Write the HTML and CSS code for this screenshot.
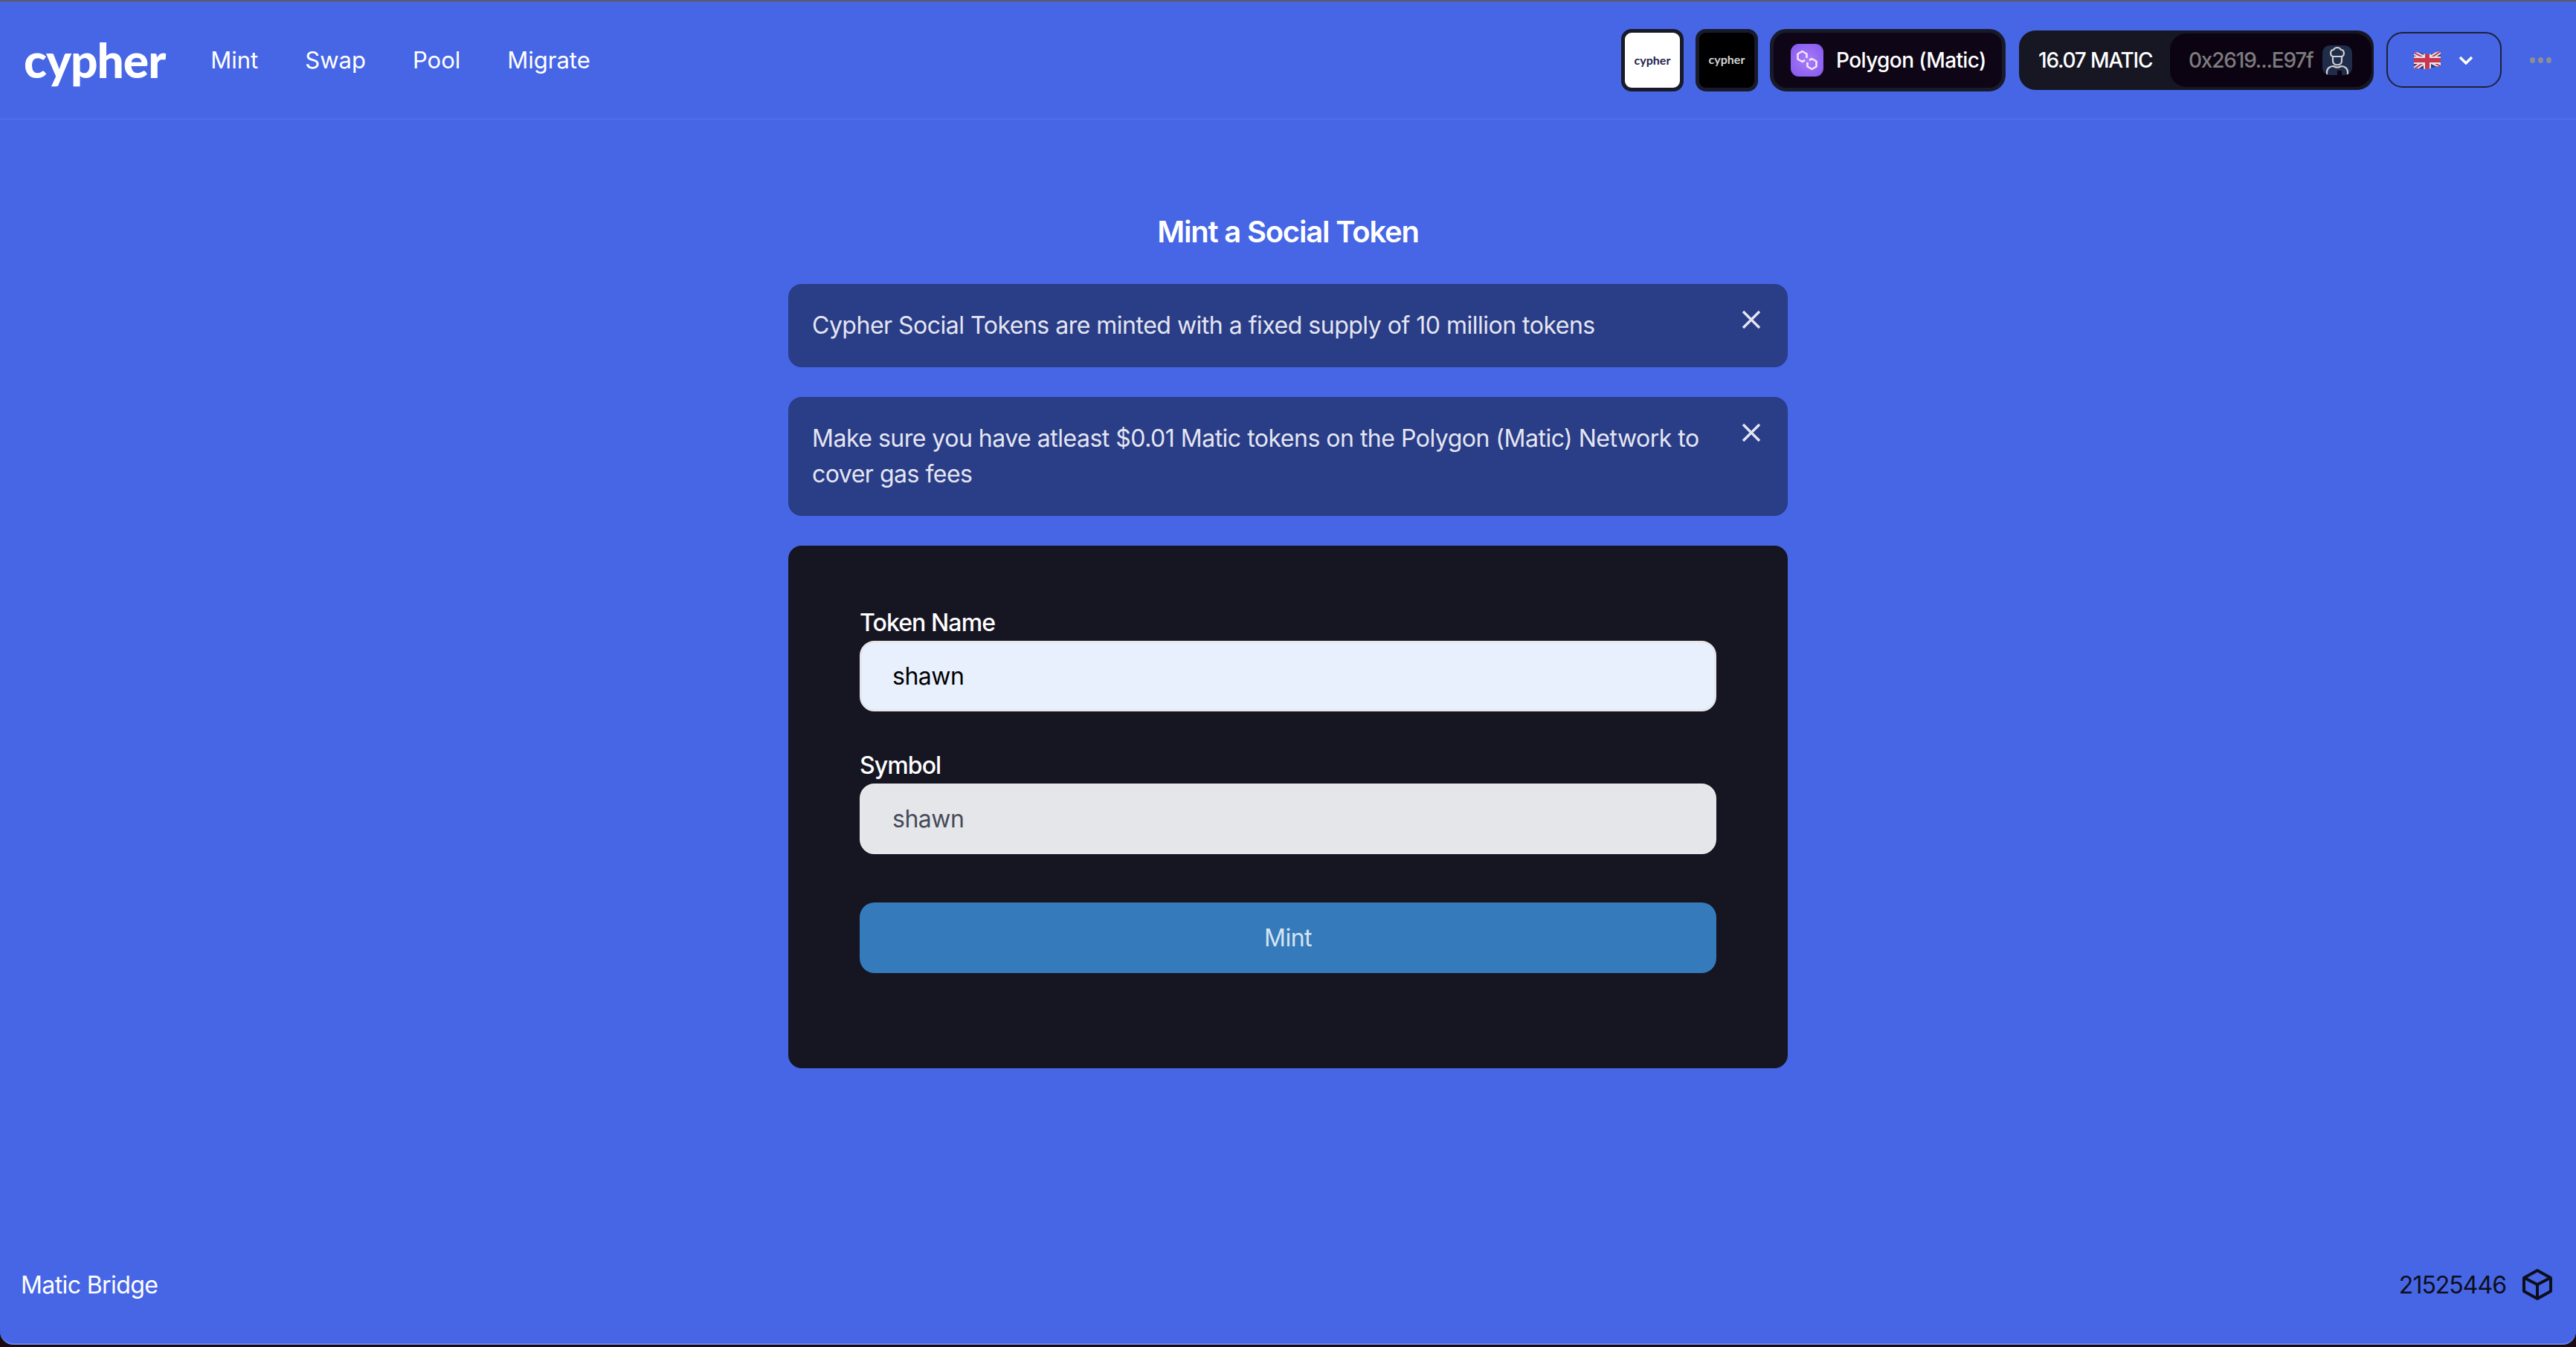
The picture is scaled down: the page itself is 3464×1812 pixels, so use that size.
FILE: index.html
```html
<!DOCTYPE html>
<html lang="en">
<head>
    <meta charset="UTF-8">
    <meta name="viewport" content="width=device-width, initial-scale=1.0">
    <title>Cypher</title>
    <link rel="stylesheet" href="styles.css">
</head>
<body>
    <div class="app">
        <header class="header">
            <div class="header-left">
                <span class="logo">cypher</span>
                <nav class="nav">
                    <a class="nav-link">Mint</a>
                    <a class="nav-link">Swap</a>
                    <a class="nav-link">Pool</a>
                    <a class="nav-link">Migrate</a>
                </nav>
            </div>
            <div class="header-right">
                <button class="theme-btn theme-light"><span class="theme-logo">cypher</span></button>
                <button class="theme-btn theme-dark"><span class="theme-logo">cypher</span></button>
                <button class="network-btn">
                    <span class="network-icon">
                        <svg viewBox="0 0 44 44" width="44" height="44" fill="none" stroke="#f0e6ff" stroke-width="2.6" stroke-linejoin="round">
                            <path d="M21.500 19V13.500L15.500 10l-6 3.500v7l6 3.500 3.500-2"/>
                            <path d="M22.500 25v5.500l6 3.500 6-3.500v-7l-6-3.500-3.500 2"/>
                        </svg>
                    </span>
                    Polygon (Matic)
                </button>
                <div class="account">
                    <span class="balance">16.07 MATIC</span>
                    <span class="address">
                        0x2619...E97f
                        <span class="avatar">
                            <svg viewBox="0 0 40 40" width="40" height="40" fill="none" stroke="#cfcfcf" stroke-width="2.2" stroke-linejoin="round">
                                <path d="M14 15c-4-1-4-9 1-9 2-4 8-4 10 0 5 0 5 8 1 9z"/>
                                <path d="M14 15v6c0 7 12 7 12 0v-6"/>
                                <path d="M6 40v-4c0-5 4-8 9-8 3 2 7 2 10 0 5 0 9 3 9 8v4"/>
                            </svg>
                            <i class="avatar-pocket"></i>
                        </span>
                    </span>
                </div>
                <button class="lang-btn">
                    <svg class="flag" viewBox="0 0 36 28" width="36" height="28">
                        <clipPath id="flagShape">
                            <path d="M0 4C8 1 13 7 20 6S30 2 36 2V22C28 22 24 25 18 26S6 23 0 26Z"/>
                        </clipPath>
                        <g clip-path="url(#flagShape)">
                            <rect width="36" height="28" fill="#2b3f7d"/>
                            <path d="M0 4l36 18M36 2L0 26" stroke="#e8e4e8" stroke-width="6"/>
                            <path d="M0 4l36 18M36 2L0 26" stroke="#c8374f" stroke-width="2"/>
                            <path d="M18 0v28M0 14h36" stroke="#e8e4e8" stroke-width="10"/>
                            <path d="M18 0v28M0 14h36" stroke="#c8374f" stroke-width="6"/>
                        </g>
                    </svg>
                    <svg class="chevron" viewBox="0 0 20 12" width="20" height="12" fill="none" stroke="#fff" stroke-width="3.400">
                        <path d="M2 2l8 8 8-8"/>
                    </svg>
                </button>
                <span class="more-dots"><i></i><i></i><i></i></span>
            </div>
        </header>

        <main class="main">
            <h1 class="title">Mint a Social Token</h1>

            <div class="alert">
                <p>Cypher Social Tokens are minted with a fixed supply of 10 million tokens</p>
                <svg class="close" viewBox="0 0 26 26" width="26" height="26" stroke="#e4e6f2" stroke-width="3.400">
                    <path d="M2 2l22 22M24 2L2 24"/>
                </svg>
            </div>
            <div class="alert">
                <p>Make sure you have atleast $0.01 Matic tokens on the Polygon (Matic) Network to cover gas fees</p>
                <svg class="close" viewBox="0 0 26 26" width="26" height="26" stroke="#e4e6f2" stroke-width="3.400">
                    <path d="M2 2l22 22M24 2L2 24"/>
                </svg>
            </div>

            <form class="card">
                <label class="field-label">Token Name</label>
                <input class="field" type="text" value="shawn">
                <label class="field-label">Symbol</label>
                <input class="field field-disabled" type="text" value="shawn" disabled>
                <button class="mint-btn" type="button">Mint</button>
            </form>
        </main>

        <footer class="footer">
            <a class="bridge">Matic Bridge</a>
            <div class="block">
                <span>21525446</span>
                <svg viewBox="0 0 24 24" width="48" height="48" fill="none" stroke="#0d0e1c" stroke-width="2" stroke-linejoin="round">
                    <path d="M21 16.500v-9l-9-5-9 5v9l9 5z"/>
                    <path d="M3.300 7.500L12 12l8.700-4.500M12 21.500V12"/>
                </svg>
            </div>
        </footer>
    </div>
</body>
</html>
```

FILE: styles.css
```css
* {
    box-sizing: border-box;
}
body {
    margin: 0;
    height: 1812px;
    background-color: #1c0a10;
    font-family: "Inter", "Noto Sans", sans-serif;
    color: white;
    overflow: hidden;
}
.app {
    height: 1809px;
    display: flex;
    flex-direction: column;
    background-color: #4666e5;
    border-top: 2px solid #5c5c5e;
    border-bottom: 2px solid #6c86ea;
    border-radius: 0 0 18px 18px;
}
.header {
    height: 159px;
    flex-shrink: 0;
    display: flex;
    justify-content: space-between;
    align-items: center;
    padding: 0 33px 0 32px;
    border-bottom: 2px solid #4f6fe6;
}
.header-left {
    display: flex;
    align-items: center;
}
.logo {
    font-family: "Lato", sans-serif;
    font-size: 64px;
    font-weight: 900;
    letter-spacing: -1px;
    line-height: 1;
    margin-right: 61px;
}
.nav {
    display: flex;
    gap: 63px;
}
.nav-link {
    font-size: 31px;
}
.header-right {
    display: flex;
    align-items: center;
}
.theme-btn {
    width: 84px;
    height: 84px;
    padding: 0;
    margin-right: 16px;
    border: 5px solid #191a2a;
    border-radius: 14px;
    display: flex;
    align-items: center;
    justify-content: center;
}
.theme-light {
    background-color: white;
    color: #23234a;
}
.theme-dark {
    padding-bottom: 3px;
    background-color: black;
    color: #d4d4d4;
}
.theme-logo {
    font-family: "Lato", sans-serif;
    font-size: 16px;
    font-weight: 700;
}
.network-btn {
    width: 317px;
    height: 84px;
    padding: 0 0 0 23px;
    margin-right: 18px;
    background-color: #0e0616;
    border: 5px solid #191a2a;
    border-radius: 22px;
    color: white;
    font-family: inherit;
    font-size: 28px;
    font-weight: 500;
    letter-spacing: -0.6px;
    display: flex;
    align-items: center;
    gap: 17px;
    white-space: nowrap;
}
.network-icon {
    width: 44px;
    height: 44px;
    border-radius: 11px;
    background: radial-gradient(circle, #a97cf7, #8457ef);
    display: flex;
}
.account {
    width: 477px;
    height: 80px;
    margin-right: 17px;
    padding: 4px 3px 4px 26px;
    background-color: #171724;
    border-radius: 22px;
    display: flex;
    align-items: center;
    justify-content: space-between;
    font-size: 28px;
    font-weight: 500;
    letter-spacing: -1.2px;
}
.address {
    width: 271px;
    height: 72px;
    padding: 0 26px 0 25px;
    background-color: #0b0311;
    border-radius: 22px;
    color: #7d7b80;
    display: flex;
    align-items: center;
    justify-content: space-between;
}
.avatar {
    width: 40px;
    height: 40px;
    border-radius: 10px;
    background-color: #1f2c4a;
    overflow: hidden;
    position: relative;
}
.avatar-pocket {
    position: absolute;
    left: 20px;
    bottom: 0;
    width: 6px;
    height: 6px;
    background-color: #0b0311;
}
.lang-btn {
    width: 155px;
    height: 75px;
    margin-right: 38px;
    padding: 0 36px 0 35px;
    background: none;
    border: 2px solid #1e2138;
    border-radius: 22px;
    display: flex;
    align-items: center;
    justify-content: space-between;
}
.more-dots {
    display: flex;
    gap: 4px;
}
.more-dots i {
    width: 7px;
    height: 8px;
    border-radius: 50%;
    background-color: #8b8d97;
}
.main {
    flex: 1;
    width: 1344px;
    margin: 0 auto;
}
.title {
    margin: 124px 0 0;
    height: 97px;
    font-size: 40px;
    line-height: 54px;
    font-weight: 600;
    letter-spacing: -1.2px;
    text-align: center;
}
.alert {
    padding: 32px;
    margin-bottom: 40px;
    background-color: #2a3d87;
    border-radius: 18px;
    display: flex;
    justify-content: space-between;
    align-items: flex-start;
    color: #e4e6f2;
    font-size: 32px;
    line-height: 48px;
}
.alert p {
    margin: 0;
    width: 1200px;
    letter-spacing: -0.5px;
}
.close {
    flex-shrink: 0;
    margin-top: 3px;
    margin-right: 4px;
}
.card {
    height: 703px;
    padding: 88px 96px 0;
    background-color: #161522;
    border-radius: 18px;
    display: flex;
    flex-direction: column;
}
.field-label {
    height: 40px;
    font-size: 32px;
    line-height: 32px;
    font-weight: 500;
    letter-spacing: -0.9px;
}
.field {
    height: 95px;
    flex-shrink: 0;
    margin-bottom: 57px;
    padding: 0 41px;
    background-color: #e8f0fe;
    border: 3px solid #e5e7eb;
    border-radius: 20px;
    color: black;
    font-family: inherit;
    font-size: 32px;
    letter-spacing: -0.5px;
}
.field-disabled {
    margin-bottom: 65px;
    background-color: #e5e6ea;
    color: #454a5a;
    -webkit-text-fill-color: #454a5a;
    opacity: 1;
}
.mint-btn {
    height: 95px;
    background-color: #357abb;
    border: 0;
    border-radius: 20px;
    color: #d7e4f1;
    font-family: inherit;
    font-size: 32px;
    letter-spacing: -0.5px;
}
.footer {
    display: flex;
    justify-content: space-between;
    align-items: center;
    padding: 0 28px 55px 28px;
    font-size: 32px;
}
.bridge {
    letter-spacing: -0.6px;
}
.block {
    display: flex;
    align-items: center;
    gap: 18px;
    color: #0d0e1c;
    letter-spacing: -1px;
}
```
